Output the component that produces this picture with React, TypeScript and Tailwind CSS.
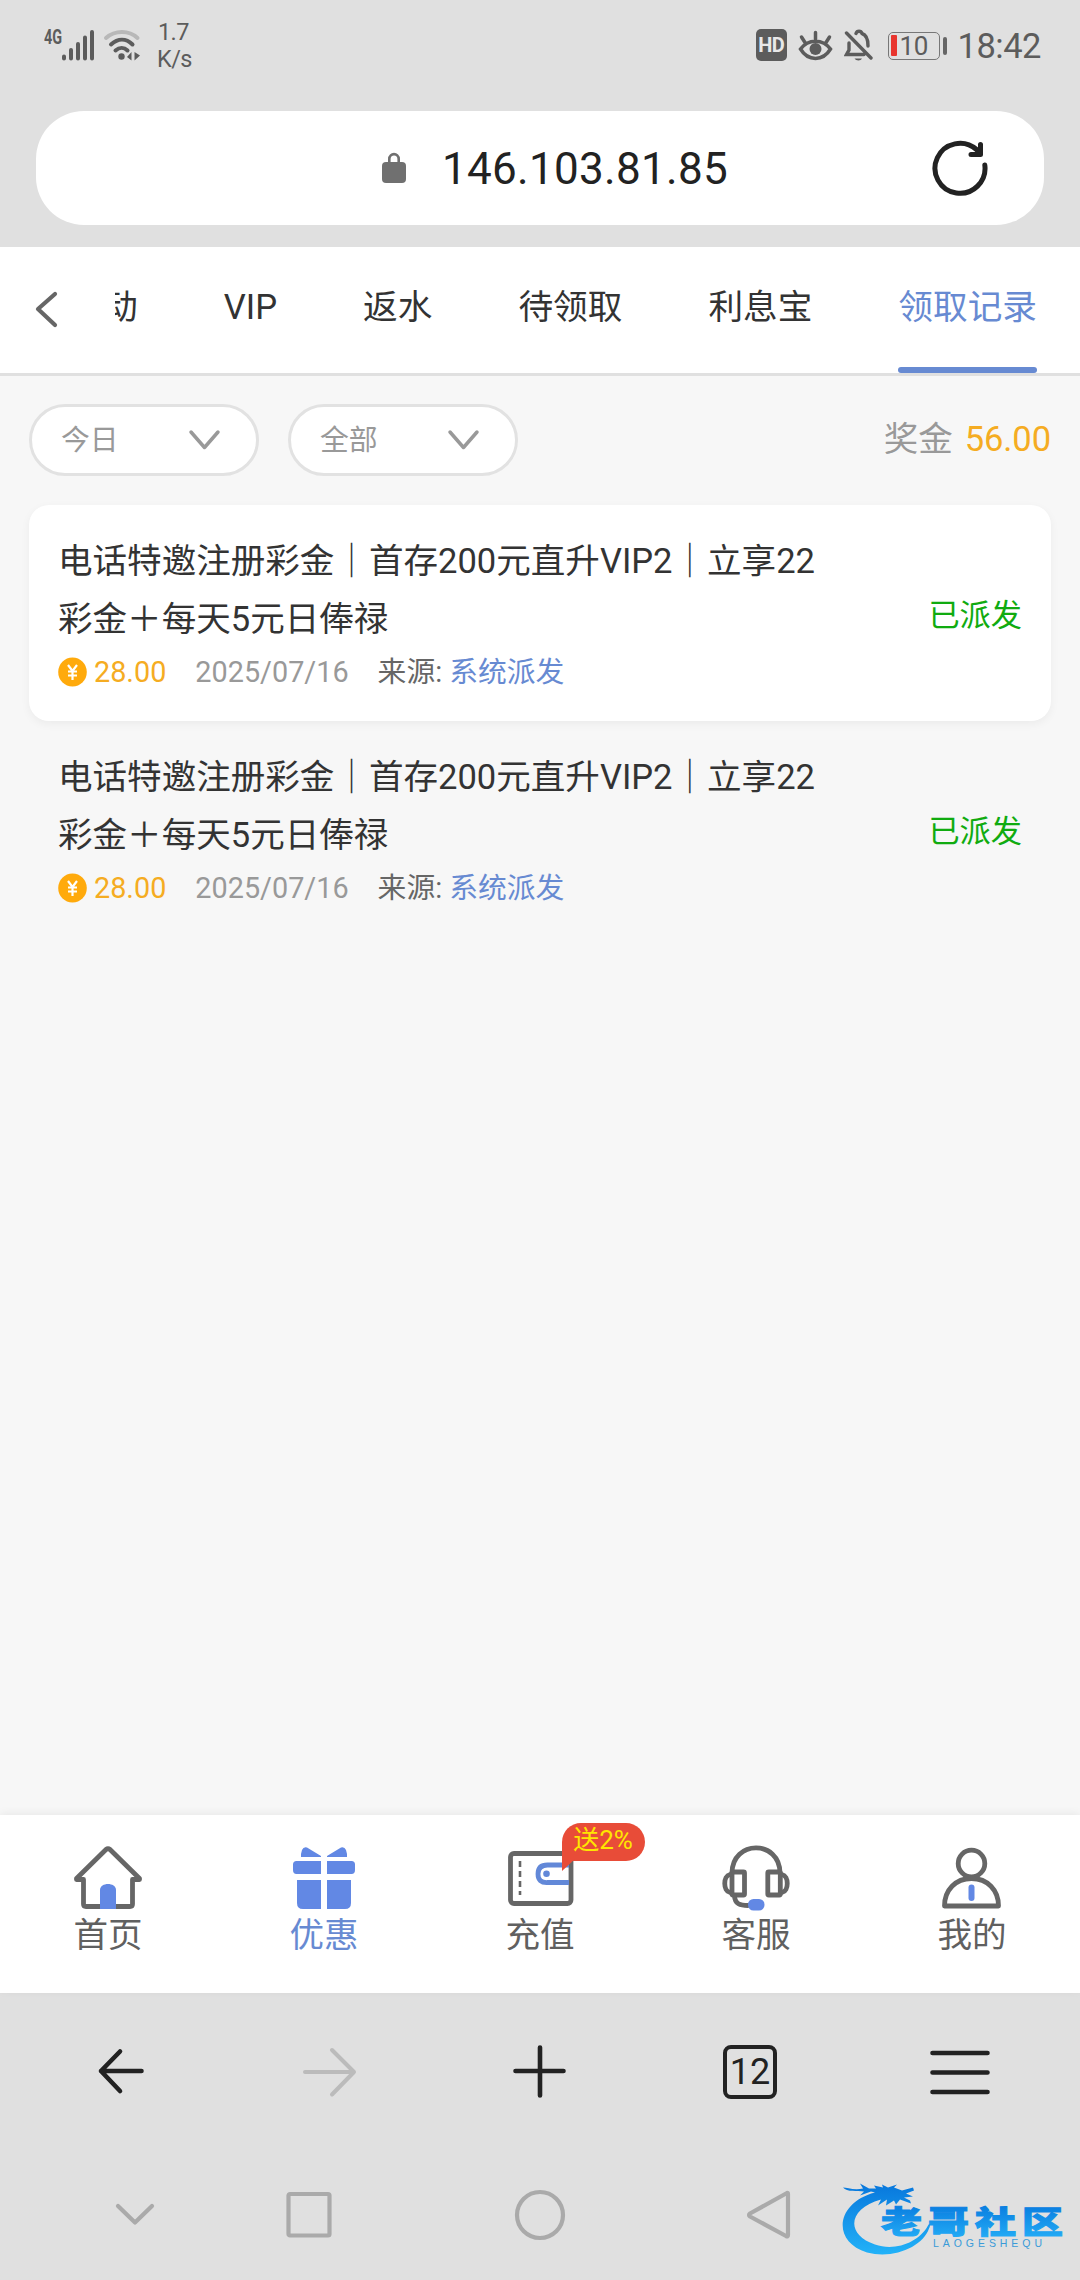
import React from "react";

const tabs = ["动", "VIP", "返水", "待领取", "利息宝", "领取记录"];

const records = [
  { amount: "28.00", date: "2025/07/16", source: "系统派发", status: "已派发", raised: true },
  { amount: "28.00", date: "2025/07/16", source: "系统派发", status: "已派发", raised: false },
];

function StatusBar() {
  return (
    <div className="flex h-[111px] shrink-0 items-start justify-between pl-[44px] pr-[39px] text-[#5c5c5c]">
      <div className="flex items-start">
        <div className="flex pt-[27px]">
          <span className="w-[18px] origin-left scale-x-[0.72] text-[20px] leading-[20px] font-bold">4G</span>
          <svg className="mt-[3px]" width="32" height="31" viewBox="0 0 32 31" stroke="currentColor" strokeWidth="4" strokeLinecap="round">
            <path d="M2 26.500V28.500M9 20V28.500M16 14V28.500M23 7.500V28.500M30 2V28.500" />
          </svg>
        </div>
        <svg className="ml-[9px] mt-[29px]" width="38" height="33" viewBox="0 0 38 33" fill="none" stroke="currentColor" strokeWidth="4" strokeLinecap="round">
          <path d="M3 9C12 1 26 1 34.500 9" stroke="#b8b8b8" />
          <path d="M8 15.500C15 9 23 9 29.500 15.500M12.500 21.500C16.500 18 21 18 24.500 21.500" />
          <circle cx="18.500" cy="27.500" r="3.200" fill="currentColor" stroke="none" />
          <path d="M28.500 23V31.500L24 28ZM31.500 23V31.500L37 26.500Z" fill="currentColor" stroke="none" />
        </svg>
        <div className="ml-[16px] mt-[18px] w-[36px] text-[23.500px] leading-[27px] tracking-[-0.600px]">
          <div className="pt-px pl-[1px]">1.7</div>
          <div>K/s</div>
        </div>
      </div>
      <div className="flex items-center pt-[29px]">
        <div className="flex h-[32px] w-[31px] items-center justify-center rounded-[5px] bg-[#5c5c5c]">
          <span className="text-[20px] leading-none font-bold tracking-[-0.800px] text-[#e8e8e8]">HD</span>
        </div>
        <svg className="ml-[11px]" width="35" height="32" viewBox="0 0 35 32" fill="none" stroke="currentColor" strokeWidth="3.500" strokeLinecap="round">
          <path d="M2.500 20C10 9.500 25 9.500 32.500 20C25 32.500 10 32.500 2.500 20ZM17.500 3.500V10M3.500 8L7 13.500M31.500 8L28 13.500" />
          <circle cx="17.500" cy="20" r="6" fill="currentColor" stroke="none" />
        </svg>
        <svg className="ml-[11px]" width="30" height="32" viewBox="0 0 30 32" fill="none" stroke="currentColor" strokeWidth="3.400" strokeLinecap="round">
          <path d="M2.500 4L27 29M5 14V21L2.500 25.500H20M12 4.500C13 1.500 17 1.500 18 4.500C23 6 24 11 24 17" />
          <path d="M10.500 29.500H18C17 32 12 32 10.500 29.500Z" fill="currentColor" stroke="none" />
        </svg>
        <div className="ml-[14px] mt-[1px] flex h-[28px] w-[52px] items-center rounded-[5px] border-[1.500px] border-[#777] pl-[2px]">
          <div className="h-[21px] w-[6px] rounded-[1px] bg-[#e8352e]" />
          <span className="ml-[3px] text-[26px] leading-[22px] tracking-[-0.500px]">10</span>
        </div>
        <div className="ml-[3px] mt-[1px] h-[18px] w-[4px] rounded-full bg-[#666]" />
        <span className="ml-[11px] mt-[2px] text-[34.500px] leading-[30px] tracking-[-0.500px]">18:42</span>
      </div>
    </div>
  );
}

function AddressBar() {
  return (
    <div className="h-[136px] shrink-0 px-[36px]">
      <div className="flex h-[114px] items-center rounded-[48px] bg-white">
        <svg className="ml-[345px] shrink-0" width="26" height="32" viewBox="0 0 26 32">
          <rect x="1" y="10" width="24" height="21" rx="4" fill="#707070" />
          <path d="M8.300 12V7C8.300 0.500 17.700 0.500 17.700 7V12" fill="none" stroke="#707070" strokeWidth="2.600" />
        </svg>
        <span className="mt-[2px] ml-[35px] text-[44px] leading-[50px] tracking-[0.300px] text-[#222]">146.103.81.85</span>
        <svg className="mr-[54px] ml-auto shrink-0" width="60" height="60" viewBox="0 0 60 60" fill="none" stroke="#222" strokeWidth="5" strokeLinecap="round" strokeLinejoin="round">
          <path d="M54.800 27A25 25 0 1 1 46.500 11.500L50 16M50.500 6.500V16.500H41" />
        </svg>
      </div>
    </div>
  );
}

function TabBar() {
  return (
    <div className="flex h-[129px] shrink-0 border-b-[3px] border-[#e0e0e0] bg-white">
      <svg className="mt-[42px] ml-[34px] shrink-0" width="26" height="40" viewBox="0 0 26 40" fill="none" stroke="#666" strokeWidth="4.200" strokeLinecap="round" strokeLinejoin="round">
        <path d="M21 5L4 20L21 36" />
      </svg>
      <div className="ml-[55px] flex w-[965px] justify-end overflow-hidden">
        {tabs.map((tab, i) => (
          <div key={tab} className={`relative mx-[43px] shrink-0 text-[34.660px] leading-[121px] whitespace-nowrap ${i === 5 ? "text-[#678ad2]" : "text-[#333]"}`}>
            {tab}
            {i === 5 && <span className="absolute inset-x-0 bottom-0 h-[6px] rounded-full bg-[#678ad2]" />}
          </div>
        ))}
      </div>
    </div>
  );
}

function Filter({ label }: { label: string }) {
  return (
    <div className="flex h-[72px] w-[230px] items-center justify-between rounded-full border-[3px] border-[#e2e2e2] bg-white pr-[35px] pl-[29px] text-[28.800px] leading-[40px] text-[#999]">
      {label}
      <svg width="33" height="22" viewBox="0 0 33 22" fill="none" stroke="#999" strokeWidth="3.500" strokeLinecap="round" strokeLinejoin="round">
        <path d="M3 3L16.500 18.500L30 3" />
      </svg>
    </div>
  );
}

function Coin() {
  return (
    <svg width="29" height="30" viewBox="0 0 29 30">
      <ellipse cx="14.500" cy="15" rx="14.300" ry="14.600" fill="#ffaa0c" />
      <path d="M10 8L14.500 14L19 8M14.500 14V23M10 14.500H19M10 18.500H19" fill="none" stroke="#fff" strokeWidth="2.200" />
    </svg>
  );
}

function RecordCard({ record }: { record: (typeof records)[number] }) {
  return (
    <div className={`flex h-[216px] items-center justify-between rounded-[20px] px-[29px] ${record.raised ? "bg-white shadow-[0_3px_10px_rgba(0,0,0,0.050)]" : ""}`}>
      <div className="h-full pt-[28px]">
        <div className="w-[770px] text-[34.560px] leading-[57.600px] text-[#333]">
          电话特邀注册彩金｜首存200元直升VIP2｜立享22
          <br />
          彩金＋每天5元日俸禄
        </div>
        <div className="mt-[4px] flex items-center text-[28.800px] leading-[40px]">
          <Coin />
          <span className="ml-[7px] text-[#f5ac22]">{record.amount}</span>
          <span className="ml-[29px] text-[#999]">{record.date}</span>
          <span className="ml-[29px] text-[#666]">来源:</span>
          <span className="ml-[7px] text-[#678ad2]">{record.source}</span>
        </div>
      </div>
      <span className="pt-[5px] text-[31.200px] leading-[40px] text-[#10ab10]">{record.status}</span>
    </div>
  );
}

const svgBase = { width: 72, height: 68, viewBox: "0 0 72 68", fill: "none", strokeWidth: 4.8, stroke: "#666", strokeLinejoin: "round" as const, strokeLinecap: "round" as const };

function HomeIcon() {
  return (
    <svg {...svgBase}>
      <path d="M34 5.500Q36 4 38 5.500L67.500 34.500V35.500H60.500V60Q60.500 62.500 58 62.500H14Q11.500 62.500 11.500 60V35.500H4.500V34.500Z" />
      <path d="M28 64.900V46C28 38 44 38 44 46V64.900Z" fill="#6288e4" stroke="none" />
    </svg>
  );
}

function GiftIcon() {
  return (
    <svg {...svgBase} stroke="none" fill="#6288e4">
      <path d="M13 13V10L14 6Q15.500 2.500 19 3.500L33 12V13ZM59 13V10L58 6Q56.500 2.500 53 3.500L39 12V13Z" />
      <path d="M33 17H8.500Q5 17 5 20.500V26Q5 30 8.500 30H33ZM39 17H63.500Q67 17 67 20.500V26Q67 30 63.500 30H39Z" />
      <path d="M33 36H9V59Q9 65 15 65H33ZM39 36H63V59Q63 65 57 65H39Z" />
    </svg>
  );
}

function WalletIcon() {
  return (
    <svg {...svgBase}>
      <rect x="6.500" y="9.500" width="60.500" height="50" rx="3.500" />
      <path d="M16 17V51" strokeWidth="2.600" strokeDasharray="6 4" strokeLinecap="butt" />
      <path d="M65 21H43.500Q34 21 34 30T43.500 38.500H65" stroke="#6288d8" strokeLinecap="butt" />
      <circle cx="42.500" cy="29.700" r="3.300" fill="#6288d8" stroke="none" />
    </svg>
  );
}

function HeadsetIcon() {
  return (
    <svg {...svgBase}>
      <path d="M12 29C12 -4.500 60 -4.500 60 29" />
      <rect x="12" y="28" width="12.500" height="23" rx="1" />
      <rect x="47.800" y="28" width="12.500" height="23" rx="1" />
      <path d="M10 30.500C3 32 3 47 10 48.500M62 30.500C69 32 69 47 62 48.500M14.500 52C15 60 20 61.500 28 61.500" />
      <rect x="28" y="55" width="16.500" height="11.500" rx="5.500" fill="#6288e4" stroke="none" />
    </svg>
  );
}

function ProfileIcon() {
  return (
    <svg {...svgBase}>
      <circle cx="35.500" cy="19.500" r="13.300" />
      <path d="M35.500 34.500C19.500 34.500 8.500 46 8.500 62H62.500C62.500 46 51.500 34.500 35.500 34.500Z" />
      <path d="M35.500 43.500V54" stroke="#6288e4" strokeWidth="6" />
    </svg>
  );
}

const navItems = [
  { label: "首页", icon: <HomeIcon /> },
  { label: "优惠", icon: <GiftIcon />, active: true },
  { label: "充值", icon: <WalletIcon />, badge: "送2%" },
  { label: "客服", icon: <HeadsetIcon /> },
  { label: "我的", icon: <ProfileIcon /> },
];

function BottomNav() {
  return (
    <div className="grid h-[178px] shrink-0 grid-cols-5 bg-white shadow-[0_-2px_8px_rgba(0,0,0,0.060)]">
      {navItems.map((item) => (
        <div key={item.label} className="relative flex flex-col items-center pt-[29px]">
          {item.icon}
          <span className={`mt-[2px] text-[34.560px] leading-[42px] ${item.active ? "text-[#678ad2]" : "text-[#606060]"}`}>{item.label}</span>
          {item.badge && (
            <div className="absolute top-[8px] left-[129.500px] h-[38px] w-[83px] rounded-[19px] rounded-bl-none bg-[#e84c38] text-center text-[26px] leading-[35px] text-[#ffe600]">
              {item.badge}
              <svg className="absolute top-[36px] left-0" width="13" height="12" viewBox="0 0 13 12">
                <path d="M0 0H13L0 12Z" fill="#e84c38" />
              </svg>
            </div>
          )}
        </div>
      ))}
    </div>
  );
}

const barSvg = { width: 60, height: 60, viewBox: "0 0 60 60", fill: "none", stroke: "#222", strokeWidth: 4.6, strokeLinecap: "round" as const, strokeLinejoin: "round" as const };

function BrowserBar() {
  return (
    <div className="grid h-[157px] shrink-0 grid-cols-5 items-center justify-items-center px-[15px]">
      <svg {...barSvg}><path d="M51.500 29H11M30 9.500L11 29L30 49" /></svg>
      <svg {...barSvg} stroke="#bbb" strokeWidth="4"><path d="M5 30H54M32 8L54 30L32 52.500" /></svg>
      <svg {...barSvg}><path d="M5.500 29H53.500M30 5.500V53.500" /></svg>
      <div className="flex h-[54px] w-[54px] items-center justify-center rounded-[8px] border-[4.500px] border-[#222] text-[36px] leading-none text-[#222]">12</div>
      <svg {...barSvg}><path d="M2.500 11H57.500M2.500 30.500H57.500M2.500 50H57.500" /></svg>
    </div>
  );
}

function DragonLogo() {
  return (
    <svg className="ml-[40px]" width="226" height="80" viewBox="0 0 226 80">
      <defs>
        <linearGradient id="ring" x1="0" y1="0" x2="0" y2="1">
          <stop offset="0" stopColor="#0877dc" />
          <stop offset="1" stopColor="#22b2f8" />
        </linearGradient>
        <linearGradient id="word" x1="0" y1="0" x2="0" y2="1">
          <stop offset="0.200" stopColor="#0a7ee0" />
          <stop offset="0.900" stopColor="#22aaf5" />
        </linearGradient>
      </defs>
      <path transform="translate(0 6.500)" d="M35 11C-4 21 -9 60 27 71C54 78 83 65 89 47C91 43 90 41 88 44C79 61 55 70 35 63C5 53 8 27 41 18L38 24L47 18L46 24L54 19L56 23L60 18L71 22L70 19L64 16L73 15L66 12L74 9L73 6L62 9L54 6L57 3L48 6L42 3L43 6L34 4L36 7L29 7L20 2L23 7C14 9 7 6 3 6C7 11 17 9 24 10L20 14L31 10Z" fill="url(#ring)" />
      <text x="41" y="0" transform="translate(0 58) scale(1 0.760)" fontFamily='"Noto Sans CJK SC", sans-serif' fontWeight="900" fontSize="41" textLength="182" lengthAdjust="spacing" fill="url(#word)" stroke="url(#word)" strokeWidth="1.400">老哥社区</text>
      <text x="93" y="72" fontFamily='"Liberation Sans", sans-serif' fontSize="10.500" textLength="109" lengthAdjust="spacing" fill="#3a9bd8">LAOGESHEQU</text>
    </svg>
  );
}

function SystemNav() {
  const gray = { ...barSvg, stroke: "#aaa", strokeWidth: 4.2 };
  return (
    <div className="flex h-[130px] shrink-0 items-center pl-[105px]">
      <svg {...gray}><path d="M13 21L30 37.500L47 21" /></svg>
      <svg {...gray} className="ml-[114px]"><rect x="9.500" y="9" width="41" height="41.500" rx="1.500" /></svg>
      <svg {...gray} className="ml-[171px]"><circle cx="30" cy="30" r="23" /></svg>
      <svg {...gray} className="ml-[170px]"><path d="M47 8Q48 7.500 48 9V50Q48 52 46 51L10 31.500Q8 30 10 28.500Z" /></svg>
      <DragonLogo />
    </div>
  );
}

export default function App() {
  return (
    <div className="flex h-[2280px] w-[1080px] flex-col overflow-hidden bg-[#e0e0e0] font-[Roboto,'Noto_Sans_CJK_SC',sans-serif] antialiased">
      <StatusBar />
      <AddressBar />
      <TabBar />
      <main className="min-h-0 flex-1 bg-[#f7f7f7] px-[29px] pt-[28px]">
        <div className="flex items-center">
          <Filter label="今日" />
          <div className="w-[29px]" />
          <Filter label="全部" />
          <div className="-mt-[2px] ml-auto text-[34.560px] leading-[50px]">
            <span className="text-[#999]">奖金</span>
            <span className="ml-[12px] tracking-[-0.100px] text-[#f5ac22]">56.00</span>
          </div>
        </div>
        <div className="mt-[29px]">
          {records.map((record, i) => (
            <RecordCard key={i} record={record} />
          ))}
        </div>
      </main>
      <BottomNav />
      <BrowserBar />
      <SystemNav />
    </div>
  );
}
